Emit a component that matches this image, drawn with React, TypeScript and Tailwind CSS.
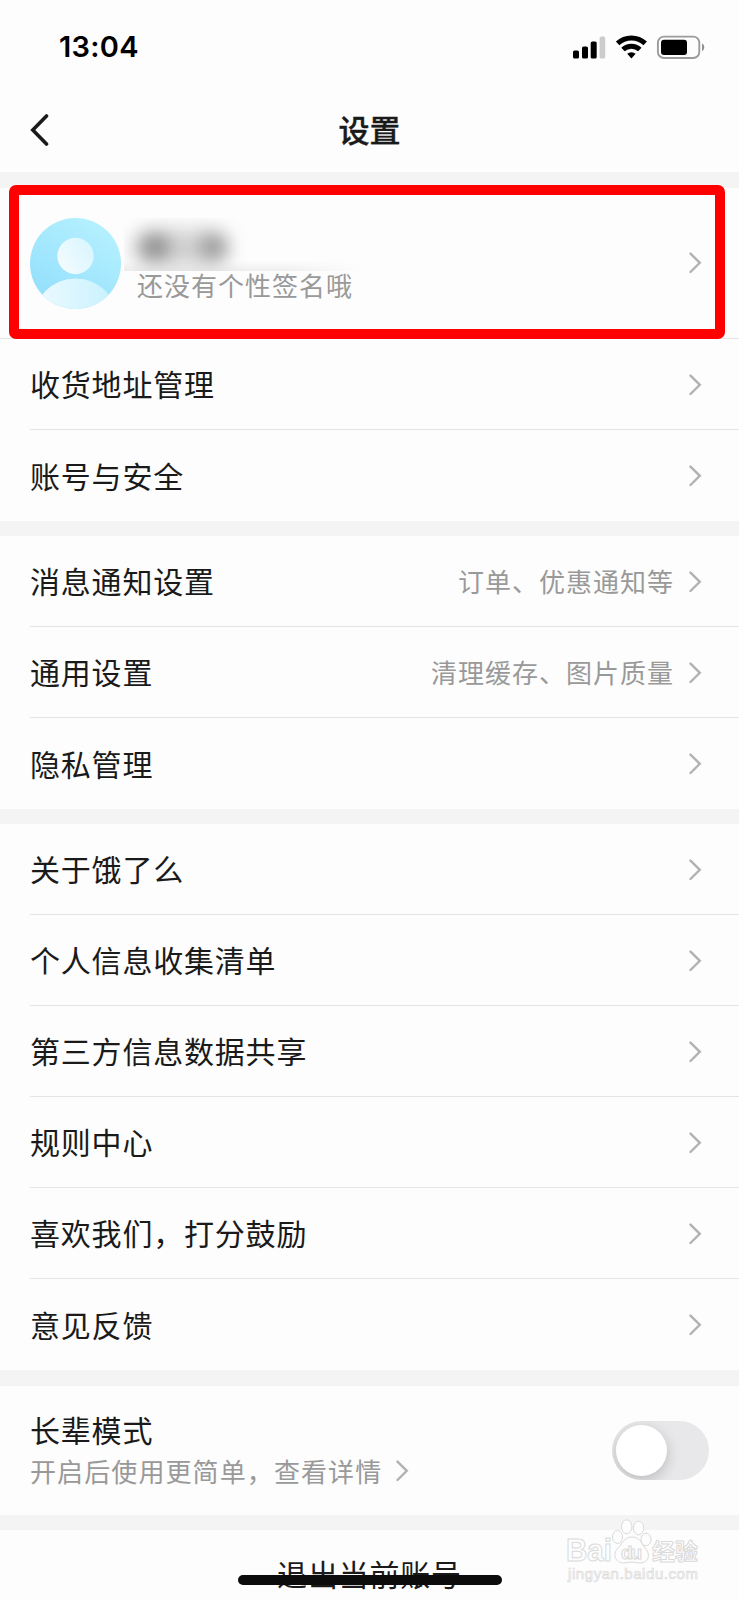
import { ReactNode } from "react";

type Row = {
  label: string;
  hint?: string;
};

const accountRows: Row[] = [{ label: "收货地址管理" }, { label: "账号与安全" }];

const generalRows: Row[] = [
  { label: "消息通知设置", hint: "订单、优惠通知等" },
  { label: "通用设置", hint: "清理缓存、图片质量" },
  { label: "隐私管理" }
];

const aboutRows: Row[] = [
  { label: "关于饿了么" },
  { label: "个人信息收集清单" },
  { label: "第三方信息数据共享" },
  { label: "规则中心" },
  { label: "喜欢我们，打分鼓励" },
  { label: "意见反馈" }
];

function Chevron() {
  return (
    <svg className="h-[22px] w-[13px] shrink-0" viewBox="0 0 13 22" fill="none">
      <path d="M1.5 1.6 10.8 10.8 1.5 20" stroke="#b2b2b2" strokeWidth="2.4" strokeLinecap="round" />
    </svg>
  );
}

function StatusBar() {
  return (
    <div className="flex h-[93px] items-center justify-between pr-[34px] pl-[59px]">
      <span className="font-[Inter] text-[29px] leading-none font-semibold tracking-[0.3px] text-black">13:04</span>
      <svg className="h-6 w-[133px]" viewBox="0 0 133 24">
        <rect x="1" y="15.5" width="6" height="8" rx="1.6" />
        <rect x="10" y="11.5" width="6" height="12" rx="1.6" />
        <rect x="18.7" y="6.5" width="6" height="17" rx="1.6" />
        <rect x="27.6" y="1.5" width="5.6" height="22" rx="1.6" fill="#cccccc" />
        <g fill="none" stroke="#000" strokeWidth="5">
          <path d="M45.6 8.4a20 20 0 0 1 27.6 0" />
          <path d="M51 14.5a12.2 12.2 0 0 1 16.8 0" />
        </g>
        <path d="M55.2 18.8a6.2 6.2 0 0 1 8.4 0l-4.2 4.6z" />
        <rect x="85.9" y="1.6" width="41.4" height="21.4" rx="6" fill="none" stroke="#9b9b9b" strokeWidth="1.9" />
        <rect x="89" y="4.8" width="26" height="15.2" rx="3" />
        <path d="M130 8.5c3 1.4 3 6.2 0 7.6z" fill="#8f8f8f" />
      </svg>
    </div>
  );
}

function Avatar() {
  return (
    <svg className="size-[91px] shrink-0" viewBox="0 0 91 91">
      <defs>
        <linearGradient id="avatar-bg" x1="0.25" y1="0.9" x2="0.8" y2="0.1">
          <stop offset="0" stopColor="#95e0fc" />
          <stop offset="1" stopColor="#b4f0ff" />
        </linearGradient>
        <linearGradient id="avatar-fg" x1="1" y1="0" x2="0" y2="0.6">
          <stop offset="0" stopColor="#d6f5fe" />
          <stop offset="1" stopColor="#f1fbff" />
        </linearGradient>
        <linearGradient id="avatar-body" x1="0" y1="0" x2="1" y2="0">
          <stop offset="0" stopColor="#eefaff" />
          <stop offset="1" stopColor="#c6f1fe" />
        </linearGradient>
        <clipPath id="avatar-clip">
          <circle cx="45.5" cy="45.5" r="45.5" />
        </clipPath>
      </defs>
      <g clipPath="url(#avatar-clip)">
        <rect width="91" height="91" fill="url(#avatar-bg)" />
        <circle cx="45.5" cy="38" r="18.2" fill="url(#avatar-fg)" />
        <circle cx="45.5" cy="103" r="42.5" fill="url(#avatar-body)" />
      </g>
    </svg>
  );
}

function ListRow({ label, hint, last }: Row & { last: boolean }) {
  return (
    <li className={last ? "ml-[30px] flex h-[91px] items-center" : "ml-[30px] flex h-[91px] items-center border-b border-[#e5e5e5]"}>
      <span className="flex-1 pb-px text-[30px] tracking-[0.8px] text-[#1a1a1a]">{label}</span>
      {hint && <span className="mr-[15px] pb-[2px] text-[26px] tracking-[1px] text-[#999999]">{hint}</span>}
      <span className="mr-[37px] flex pt-px">
        <Chevron />
      </span>
    </li>
  );
}

function Section({ rows, children }: { rows: Row[]; children?: ReactNode }) {
  return (
    <section className="bg-[#fdfdfd]">
      {children}
      <ul>
        {rows.map((row, index) => (
          <ListRow key={row.label} {...row} last={index === rows.length - 1} />
        ))}
      </ul>
    </section>
  );
}

function Watermark() {
  return (
    <svg className="absolute top-[1518px] left-[564px] h-[70px] w-[140px]" viewBox="0 0 140 70" fill="#fdfdfd" stroke="#dadada" strokeWidth="1">
      <g fontFamily="'Liberation Sans', 'Noto Sans CJK SC', sans-serif" fontWeight="700">
        <text x="2" y="43" fontSize="31" textLength="46" lengthAdjust="spacingAndGlyphs">Bai</text>
        <ellipse cx="53.5" cy="19" rx="5" ry="6.5" />
        <ellipse cx="62.7" cy="8.8" rx="5.2" ry="7" />
        <ellipse cx="74.6" cy="10" rx="5.2" ry="6.8" />
        <ellipse cx="82" cy="21.5" rx="5" ry="6.3" />
        <path d="M68 19c8 0 9 6 13 11 6 6 4 15-5 15-3 0-5-1-8-1s-5 1-8 1c-9 0-12-9-6-15 5-5 6-11 14-11z" />
        <text x="57" y="40.5" fontSize="19" textLength="21">du</text>
        <text x="88" y="42" fontSize="23" textLength="46">经验</text>
        <text x="4" y="61" fontSize="15" strokeWidth="0.7" textLength="130" fontWeight="400">jingyan.baidu.com</text>
      </g>
    </svg>
  );
}

export default function App() {
  return (
    <div className="relative h-[1600px] w-[739px] overflow-hidden bg-[#f4f4f4] font-['Noto_Sans_CJK_SC','Liberation_Sans',sans-serif]">
      <header className="h-[172px] bg-[#fdfdfd]">
        <StatusBar />
        <div className="flex h-[73px] items-center pl-[30px]">
          <svg className="h-8 w-[19px]" viewBox="0 0 19 32" fill="none">
            <path d="M16.5 2 2.8 16 16.5 30" stroke="#1a1a1a" strokeWidth="3.6" strokeLinecap="round" />
          </svg>
          <h1 className="mr-[49px] flex-1 text-center text-[31px] font-medium text-[#1a1a1a] [-webkit-text-stroke:0.4px_#1a1a1a]">
            设置
          </h1>
        </div>
      </header>

      <main className="mt-4 flex flex-col gap-[15px]">
        <Section rows={accountRows}>
          <div className="flex h-[151px] items-center border-b border-[#e5e5e5] pl-[30px]">
            <Avatar />
            <div className="ml-[3px] flex-1 pb-[11px]">
              {/* nickname is masked */}
              <div className="relative h-[53px] w-[240px] overflow-hidden bg-linear-to-b from-transparent from-80% to-[#eeeeee]">
                <div className="absolute top-3 left-[10px] h-9 w-[94px] rounded-full bg-[#d0d0d0] blur-[10px]" />
                <div className="absolute top-[18px] left-[17px] h-[22px] w-7 rounded-full bg-[#858585] blur-[9px]" />
                <div className="absolute top-[18px] left-[77px] h-[22px] w-6 rounded-full bg-[#909090] blur-[9px]" />
                <div className="absolute inset-y-0 right-0 w-20 bg-linear-to-r from-transparent to-[#fdfdfd]" />
              </div>
              <p className="ml-[13px] text-[26px] leading-[27px] tracking-[1px] text-[#999999]">还没有个性签名哦</p>
            </div>
            <span className="mr-[37px] flex">
              <Chevron />
            </span>
          </div>
        </Section>

        <Section rows={generalRows} />
        <Section rows={aboutRows} />

        <section className="mt-px flex h-[129px] items-center justify-between bg-[#fdfdfd] pr-[30px] pl-[30px]">
          <div className="pb-px">
            <p className="text-[30px] leading-[41px] tracking-[0.8px] text-[#1a1a1a]">长辈模式</p>
            <p className="flex items-center text-[26px] leading-[41px] tracking-[1.1px] text-[#999999]">
              开启后使用更简单，查看详情
              <span className="ml-[14px] flex pt-px">
                <Chevron />
              </span>
            </p>
          </div>
          <button type="button" className="h-[59px] w-[97px] overflow-hidden rounded-full bg-[#e8e8ea] p-1">
            <span className="block size-[51px] rounded-full bg-white shadow-[0_4px_14px_rgba(0,0,0,0.2)]" />
          </button>
        </section>

        <section className="h-[70px] bg-[#fdfdfd] pt-[21px] text-center text-[30px] leading-[44px] tracking-[0.8px] text-[#1a1a1a]">
          退出当前账号
        </section>
      </main>

      <div className="absolute top-[185px] left-[9px] h-[154px] w-[716px] rounded-[7px] border-[10px] border-[#ff0000]" />
      <div className="absolute top-[1575px] left-[238px] h-[10px] w-[264px] rounded-full bg-[#0c0c0c]" />
      <Watermark />
    </div>
  );
}
